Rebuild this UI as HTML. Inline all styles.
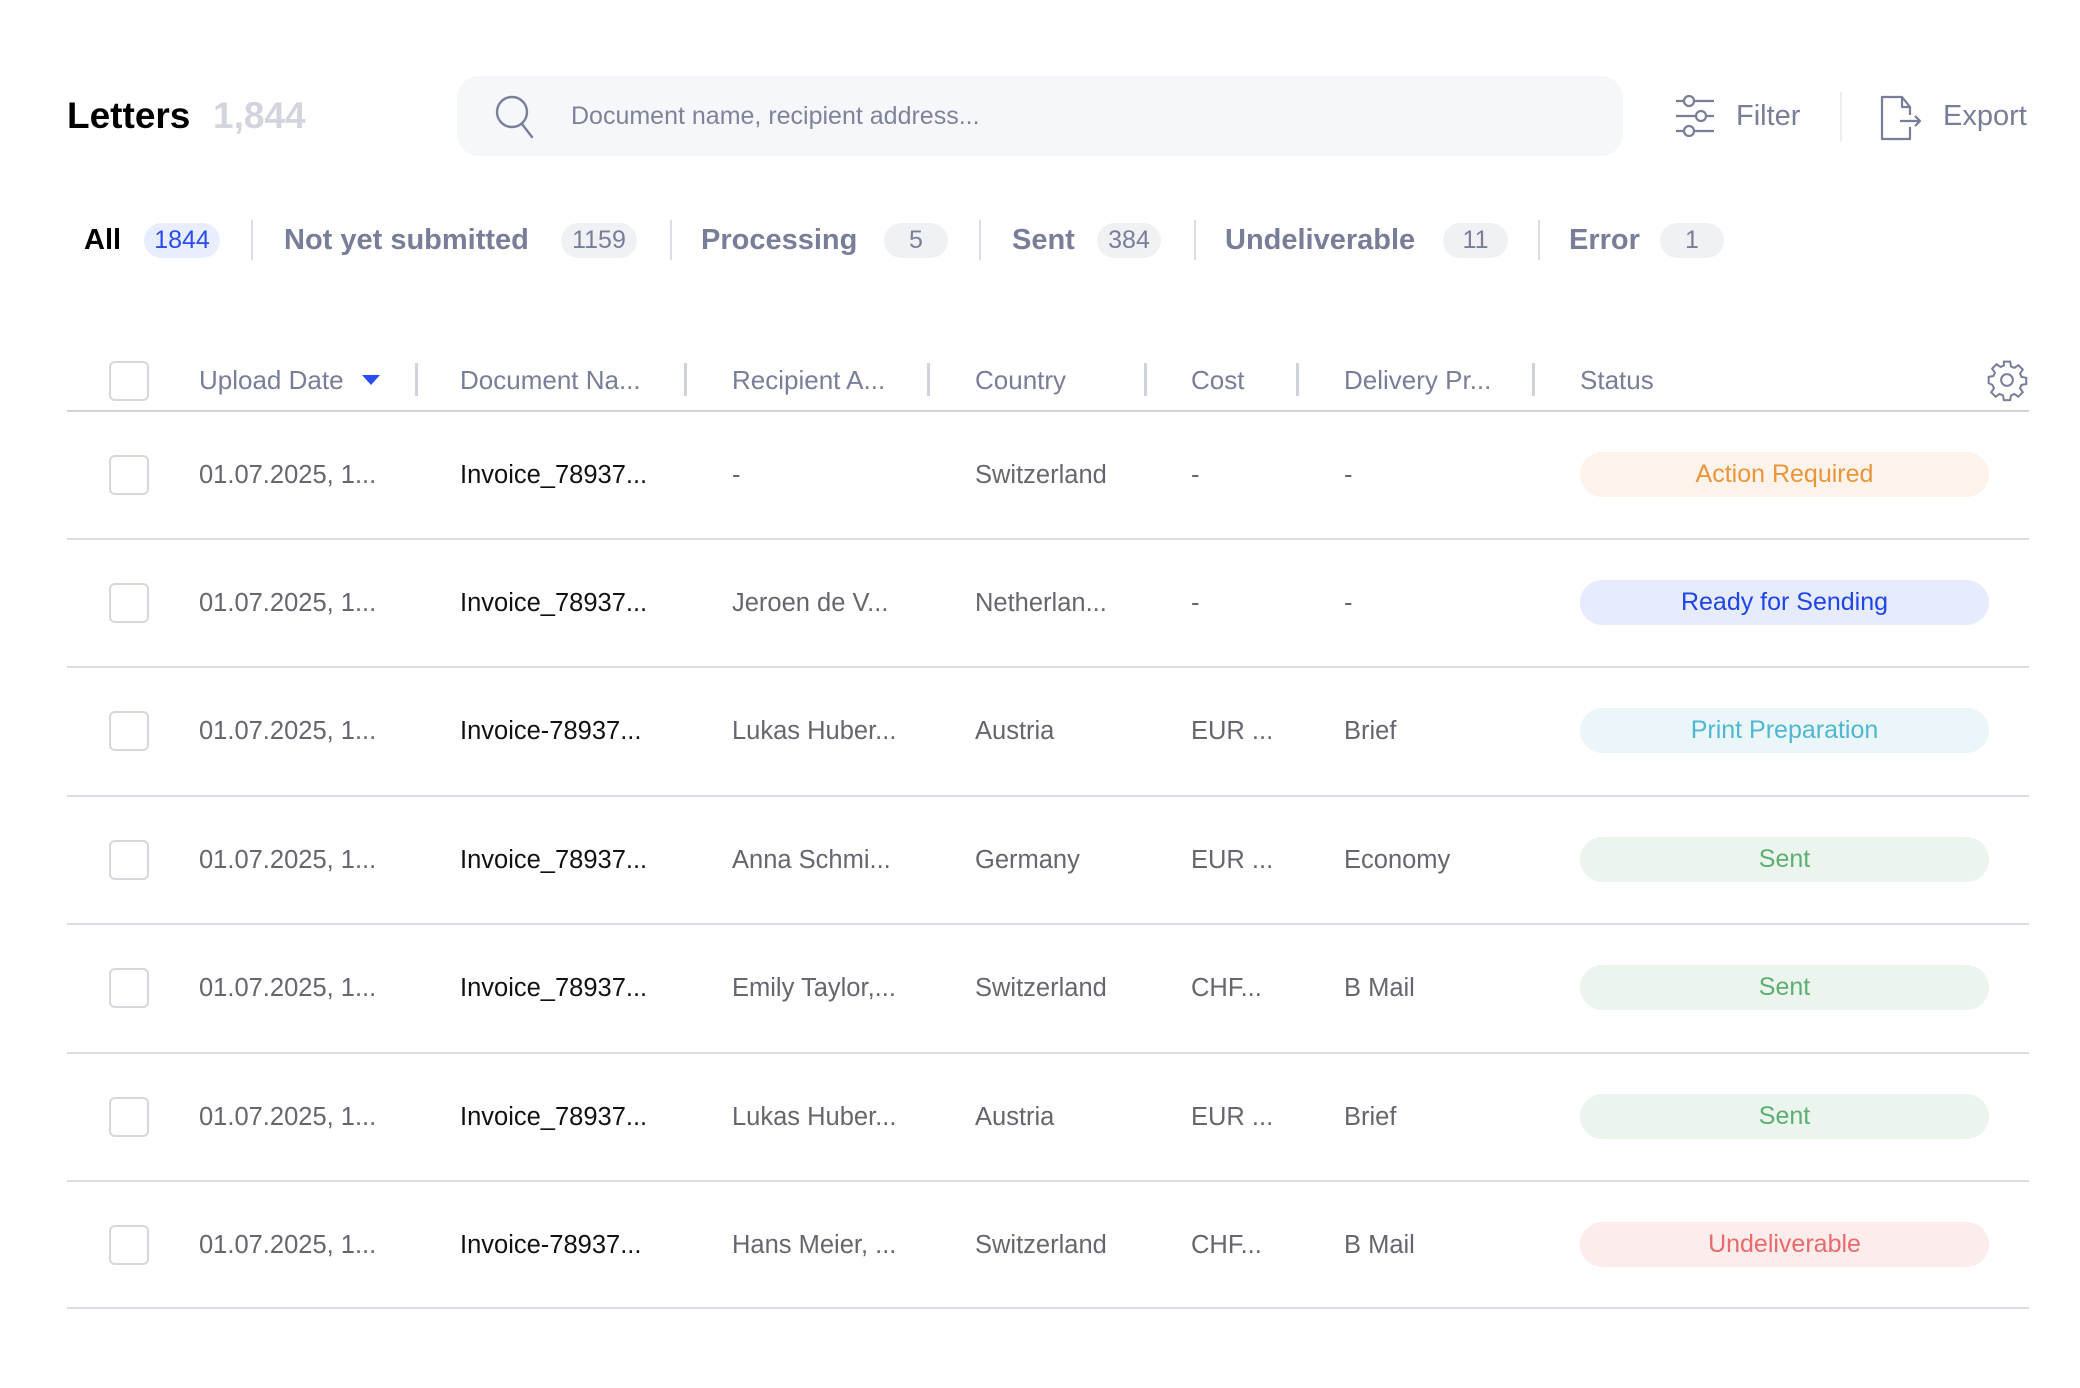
<!DOCTYPE html>
<html><head><meta charset="utf-8"><style>
*{margin:0;padding:0;box-sizing:border-box}
body{width:2080px;height:1388px;background:#fff;font-family:"Liberation Sans",Arial,sans-serif;position:relative;overflow:hidden}
.a{position:absolute;white-space:nowrap}
.title{left:67px;top:92px;font-size:37px;font-weight:bold;color:#000;line-height:48px}
.cnt{left:213px;top:92px;font-size:37px;font-weight:bold;color:#d3d5de;line-height:48px}
.search{left:457px;top:76px;width:1166px;height:80px;background:#f6f7fb;border-radius:22px}
.ph{left:571px;top:100px;font-size:25px;color:#7e8399;line-height:32px}
.tool{top:99px;font-size:29px;color:#787e98;line-height:34px}
.tab{top:222px;font-size:29px;font-weight:bold;color:#787e98;line-height:36px}
.badge{top:223px;height:35px;border-radius:18px;background:#f0f1f5;color:#787e98;font-size:25px;line-height:35px;text-align:center}
.vd{width:2px;background:#dcdee6}
.hd{top:364px;font-size:26px;color:#787e98;line-height:32px}
.cb{width:40px;height:40px;border:2px solid #d6d8e0;border-radius:6px;left:109px}
.hl{left:67px;width:1962px;height:2px;background:#dcdde3}
.c{font-size:25.5px;color:#66676e;line-height:32px}
.doc{color:#111}
.pill{left:1580px;width:409px;height:45px;border-radius:23px;font-size:25px;line-height:45px;text-align:center}
</style></head><body>
<div class="a title">Letters</div>
<div class="a cnt">1,844</div>
<div class="a search"></div>
<svg class="a" style="left:494px;top:94px" width="42" height="46" viewBox="0 0 42 46"><circle cx="18" cy="18" r="15" fill="none" stroke="#7b8099" stroke-width="2.4"/><path d="M28 30 L38 43" stroke="#7b8099" stroke-width="2.4" stroke-linecap="round"/></svg>
<div class="a ph">Document name, recipient address...</div>
<svg class="a" style="left:1674px;top:95px" width="42" height="42" viewBox="0 0 42 42" fill="none" stroke="#787e98" stroke-width="2.2"><path d="M2 6H10M20 6H40M2 21H22M32 21H40M2 36H10M20 36H40"/><circle cx="15" cy="6" r="5"/><circle cx="27" cy="21" r="5"/><circle cx="15" cy="36" r="5"/></svg>
<div class="a tool" style="left:1736px">Filter</div>
<div class="a vd" style="left:1840px;top:92px;height:50px;background:#eceef2"></div>
<svg class="a" style="left:1880px;top:95px" width="44" height="46" viewBox="0 0 44 46" fill="none" stroke="#787e98" stroke-width="2.2" stroke-linejoin="round"><path d="M30 20V12L22 2H2V44H30V32"/><path d="M22 2V12H30"/><path d="M20 26H40M35 21L40 26L35 31"/></svg>
<div class="a tool" style="left:1943px">Export</div>

<div class="a tab" style="left:84px;color:#000">All</div>
<div class="a badge" style="left:144px;width:76px;background:#e8eeff;color:#2b4cf0">1844</div>
<div class="a vd" style="left:251px;top:220px;height:40px"></div>
<div class="a tab" style="left:284px">Not yet submitted</div>
<div class="a badge" style="left:561px;width:76px">1159</div>
<div class="a vd" style="left:670px;top:220px;height:40px"></div>
<div class="a tab" style="left:701px">Processing</div>
<div class="a badge" style="left:884px;width:64px">5</div>
<div class="a vd" style="left:979px;top:220px;height:40px"></div>
<div class="a tab" style="left:1012px">Sent</div>
<div class="a badge" style="left:1097px;width:64px">384</div>
<div class="a vd" style="left:1194px;top:220px;height:40px"></div>
<div class="a tab" style="left:1225px">Undeliverable</div>
<div class="a badge" style="left:1443px;width:65px">11</div>
<div class="a vd" style="left:1538px;top:220px;height:40px"></div>
<div class="a tab" style="left:1569px">Error</div>
<div class="a badge" style="left:1660px;width:64px">1</div>

<div class="a cb" style="top:361px"></div>
<div class="a hd" style="left:199px">Upload Date</div>
<svg class="a" style="left:362px;top:375px" width="18" height="12"><path d="M0 0H18L9 10Z" fill="#2b4cf0"/></svg>
<div class="a vd" style="left:415px;top:363px;height:33px;width:3px;background:#d0d3dc"></div>
<div class="a hd" style="left:460px">Document Na...</div>
<div class="a vd" style="left:684px;top:363px;height:33px;width:3px;background:#d0d3dc"></div>
<div class="a hd" style="left:732px">Recipient A...</div>
<div class="a vd" style="left:927px;top:363px;height:33px;width:3px;background:#d0d3dc"></div>
<div class="a hd" style="left:975px">Country</div>
<div class="a vd" style="left:1144px;top:363px;height:33px;width:3px;background:#d0d3dc"></div>
<div class="a hd" style="left:1191px">Cost</div>
<div class="a vd" style="left:1296px;top:363px;height:33px;width:3px;background:#d0d3dc"></div>
<div class="a hd" style="left:1344px">Delivery Pr...</div>
<div class="a vd" style="left:1532px;top:363px;height:33px;width:3px;background:#d0d3dc"></div>
<div class="a hd" style="left:1580px">Status</div>
<svg class="a" style="left:1985px;top:358px" width="44" height="44" viewBox="0 0 24 24" fill="none" stroke="#787e98" stroke-width="1.1"><circle cx="12" cy="12" r="3.2"/><path d="M10.3 2h3.4l.5 2.6 1.8.8 2.2-1.5 2.4 2.4-1.5 2.2.8 1.8 2.6.5v3.4l-2.6.5-.8 1.8 1.5 2.2-2.4 2.4-2.2-1.5-1.8.8-.5 2.6h-3.4l-.5-2.6-1.8-.8-2.2 1.5-2.4-2.4 1.5-2.2-.8-1.8L2 13.7v-3.4l2.6-.5.8-1.8-1.5-2.2 2.4-2.4 2.2 1.5 1.8-.8z"/></svg>
<div class="a hl" style="top:410px;background:#d0d3dc"></div>

<div class="a cb" style="top:455px"></div>
<div class="a c" style="left:199px;top:459px">01.07.2025, 1...</div>
<div class="a c doc" style="left:460px;top:459px">Invoice_78937...</div>
<div class="a c" style="left:732px;top:459px">-</div>
<div class="a c" style="left:975px;top:459px">Switzerland</div>
<div class="a c" style="left:1191px;top:459px">-</div>
<div class="a c" style="left:1344px;top:459px">-</div>
<div class="a pill" style="top:452px;background:#fdf3ea;color:#e8963a">Action Required</div>
<div class="a hl" style="top:538px"></div>

<div class="a cb" style="top:583px"></div>
<div class="a c" style="left:199px;top:587px">01.07.2025, 1...</div>
<div class="a c doc" style="left:460px;top:587px">Invoice_78937...</div>
<div class="a c" style="left:732px;top:587px">Jeroen de V...</div>
<div class="a c" style="left:975px;top:587px">Netherlan...</div>
<div class="a c" style="left:1191px;top:587px">-</div>
<div class="a c" style="left:1344px;top:587px">-</div>
<div class="a pill" style="top:580px;background:#e6ebfd;color:#1f44e8">Ready for Sending</div>
<div class="a hl" style="top:666px"></div>

<div class="a cb" style="top:711px"></div>
<div class="a c" style="left:199px;top:715px">01.07.2025, 1...</div>
<div class="a c doc" style="left:460px;top:715px">Invoice-78937...</div>
<div class="a c" style="left:732px;top:715px">Lukas Huber...</div>
<div class="a c" style="left:975px;top:715px">Austria</div>
<div class="a c" style="left:1191px;top:715px">EUR ...</div>
<div class="a c" style="left:1344px;top:715px">Brief</div>
<div class="a pill" style="top:708px;background:#eaf6fa;color:#4fb7d0">Print Preparation</div>
<div class="a hl" style="top:795px"></div>

<div class="a cb" style="top:840px"></div>
<div class="a c" style="left:199px;top:844px">01.07.2025, 1...</div>
<div class="a c doc" style="left:460px;top:844px">Invoice_78937...</div>
<div class="a c" style="left:732px;top:844px">Anna Schmi...</div>
<div class="a c" style="left:975px;top:844px">Germany</div>
<div class="a c" style="left:1191px;top:844px">EUR ...</div>
<div class="a c" style="left:1344px;top:844px">Economy</div>
<div class="a pill" style="top:837px;background:#ebf5ee;color:#5cae72">Sent</div>
<div class="a hl" style="top:923px"></div>

<div class="a cb" style="top:968px"></div>
<div class="a c" style="left:199px;top:972px">01.07.2025, 1...</div>
<div class="a c doc" style="left:460px;top:972px">Invoice_78937...</div>
<div class="a c" style="left:732px;top:972px">Emily Taylor,...</div>
<div class="a c" style="left:975px;top:972px">Switzerland</div>
<div class="a c" style="left:1191px;top:972px">CHF...</div>
<div class="a c" style="left:1344px;top:972px">B Mail</div>
<div class="a pill" style="top:965px;background:#ebf5ee;color:#5cae72">Sent</div>
<div class="a hl" style="top:1052px"></div>

<div class="a cb" style="top:1097px"></div>
<div class="a c" style="left:199px;top:1101px">01.07.2025, 1...</div>
<div class="a c doc" style="left:460px;top:1101px">Invoice_78937...</div>
<div class="a c" style="left:732px;top:1101px">Lukas Huber...</div>
<div class="a c" style="left:975px;top:1101px">Austria</div>
<div class="a c" style="left:1191px;top:1101px">EUR ...</div>
<div class="a c" style="left:1344px;top:1101px">Brief</div>
<div class="a pill" style="top:1094px;background:#ebf5ee;color:#5cae72">Sent</div>
<div class="a hl" style="top:1180px"></div>

<div class="a cb" style="top:1225px"></div>
<div class="a c" style="left:199px;top:1229px">01.07.2025, 1...</div>
<div class="a c doc" style="left:460px;top:1229px">Invoice-78937...</div>
<div class="a c" style="left:732px;top:1229px">Hans Meier, ...</div>
<div class="a c" style="left:975px;top:1229px">Switzerland</div>
<div class="a c" style="left:1191px;top:1229px">CHF...</div>
<div class="a c" style="left:1344px;top:1229px">B Mail</div>
<div class="a pill" style="top:1222px;background:#fdecec;color:#e86a6a">Undeliverable</div>
<div class="a hl" style="top:1307px"></div>
</body></html>
